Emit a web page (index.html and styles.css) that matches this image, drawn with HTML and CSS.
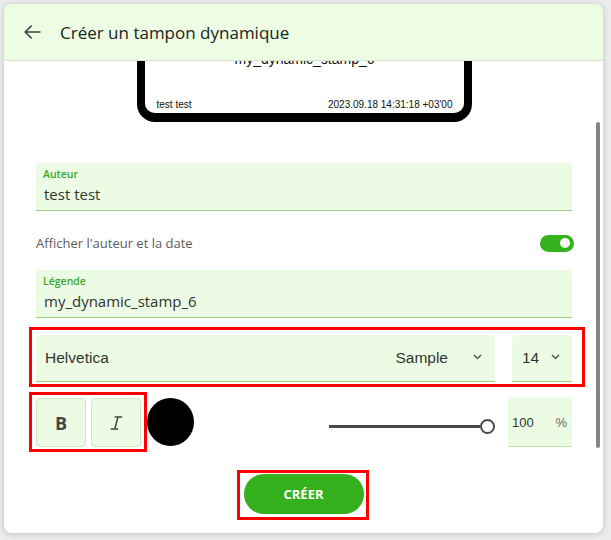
FILE: index.html
```html
<!DOCTYPE html>
<html>
  <head>
    <title>Créer un tampon dynamique</title>
    <link rel="stylesheet" href="styles.css">
  </head>
  <body>
    <div class="dialog">
      <div class="header">
        <svg class="back" width="17" height="14" viewBox="0 0 17 14">
          <path d="M1.2 7H16.5M7.6 0.6L1.2 7L7.6 13.4" fill="none" stroke="#444" stroke-width="1.6"/>
        </svg>
        <h1>Créer un tampon dynamique</h1>
      </div>

      <div class="content">
        <div class="scroll">
          <div class="stamp">
            <div class="stamp-title">my_dynamic_stamp_6</div>
            <div class="stamp-footer">
              <span>test test</span>
              <span>2023.09.18 14:31:18 +03'00</span>
            </div>
          </div>

          <div class="field field-author">
            <div class="field-label">Auteur</div>
            <div class="field-value">test test</div>
          </div>

          <div class="option">
            <span>Afficher l'auteur et la date</span>
            <span class="toggle"><span class="knob"></span></span>
          </div>

          <div class="field">
            <div class="field-label">Légende</div>
            <div class="field-value">my_dynamic_stamp_6</div>
          </div>

          <div class="font-box">
            <div class="select select-font">
              <span class="name">Helvetica</span>
              <span class="sample">Sample</span>
              <svg class="chevron" width="9" height="6" viewBox="0 0 9 6"><path d="M1 1L4.5 4.5L8 1" fill="none" stroke="#555" stroke-width="1.5"/></svg>
            </div>
            <div class="select select-size">
              <span>14</span>
              <svg class="chevron" width="9" height="6" viewBox="0 0 9 6"><path d="M1 1L4.5 4.5L8 1" fill="none" stroke="#555" stroke-width="1.5"/></svg>
            </div>
          </div>

          <div class="style-row">
            <div class="style-box">
              <div class="style-btn">B</div>
              <div class="style-btn">
                <svg width="13" height="14" viewBox="0 0 13 14">
                  <path d="M4.6 1H12.2M0.6 13H8.2M8 1L4.8 13" fill="none" stroke="#444" stroke-width="1.5"/>
                </svg>
              </div>
            </div>
            <div class="color-dot"></div>
            <div class="spacer"></div>
            <div class="slider">
              <span class="track"></span>
              <span class="thumb"></span>
            </div>
            <div class="opacity">
              <span>100</span>
              <span class="unit">%</span>
            </div>
          </div>

          <div class="actions">
            <div class="create-box">
              <button class="create-btn" type="button">CRÉER</button>
            </div>
          </div>
        </div>
        <div class="scrollbar"></div>
      </div>
    </div>
  </body>
</html>
```

FILE: styles.css
```css
body {
  margin: 0;
  height: 540px;
  overflow: hidden;
  background: #ececec;
  font-family: "Open Sans", sans-serif;
}

.dialog {
  margin: 4px 0 0 4px;
  width: 599px;
  height: 529px;
  background: #fff;
  border-radius: 8px;
  box-shadow: 0 1px 6px rgba(0, 0, 0, 0.18);
  overflow: hidden;
  display: flex;
  flex-direction: column;
}

.header {
  flex: none;
  height: 56px;
  background: #ecfde4;
  border-bottom: 1px solid #d2e5cb;
  display: flex;
  align-items: center;
  gap: 19px;
  padding-left: 20px;
}

.header h1 {
  margin: 0;
  font-size: 17px;
  font-weight: 400;
  color: #222;
}

.content {
  flex: 1;
  position: relative;
  overflow: hidden;
}

.scroll {
  padding: 0 31px 0 32px;
}

/* stamp preview, partly scrolled under the header */
.stamp {
  width: 335px;
  box-sizing: border-box;
  margin: -38px auto 0;
  border: 8px solid #000;
  border-bottom-width: 9px;
  border-radius: 18px;
  padding: 20px 11px 2px 12px;
  font-family: "Liberation Sans", Arial, sans-serif;
  color: #111;
}

.stamp-title {
  text-align: center;
  font-size: 14px;
  line-height: 16px;
  margin-bottom: 32px;
}

.stamp-footer {
  display: flex;
  justify-content: space-between;
  font-size: 10px;
  line-height: 12px;
}

.field {
  background: #ecfce4;
  border-bottom: 1px solid #98d087;
  border-radius: 4px 4px 0 0;
  padding: 4px 8px 5px;
}

.field-author {
  margin-top: 41px;
}

.field-label {
  font-size: 10.5px;
  line-height: 14px;
  font-weight: 600;
  color: #3aa82a;
  margin: 0 0 2px -1px;
}

.field-value {
  font-size: 15px;
  line-height: 22px;
  color: #333;
}

.option {
  display: flex;
  justify-content: space-between;
  align-items: center;
  height: 24px;
  margin: 20px 0 15px;
  font-size: 13px;
  color: #5c5c5c;
}

.toggle {
  width: 34px;
  height: 17px;
  margin-right: -2px;
  border-radius: 9px;
  background: #35b31f;
  display: flex;
  align-items: center;
  justify-content: flex-end;
  padding-right: 4px;
  box-sizing: border-box;
}

.knob {
  width: 10px;
  height: 10px;
  border-radius: 50%;
  background: #fff;
}

/* red annotation boxes */
.font-box {
  margin: 9px -13px 0 -7px;
  border: 3px solid #f00;
  padding: 5px 10px 2px 4px;
  display: flex;
  gap: 17px;
}

.select {
  height: 47px;
  box-sizing: border-box;
  background: #ecfce4;
  border-bottom: 1px solid #98d087;
  border-radius: 4px 4px 0 0;
  display: flex;
  align-items: center;
  font-family: "Liberation Sans", Arial, sans-serif;
  font-size: 15.5px;
  color: #333;
}

.select-font {
  flex: 1;
  padding: 0 13px 0 9px;
}

.select-font .name {
  flex: 1;
}

.select-font .sample {
  margin-right: 25px;
}

.select-size {
  width: 60px;
  padding: 0 12px 0 10px;
  justify-content: space-between;
}

.chevron {
  margin-top: -2px;
}

.style-row {
  display: flex;
  align-items: center;
  margin-top: 5px;
}

.style-box {
  margin-left: -7px;
  border: 3px solid #f00;
  padding: 3px 3px 2px 4px;
  display: flex;
  gap: 5px;
}

.style-btn {
  width: 50px;
  height: 49px;
  box-sizing: border-box;
  background: #ecfce4;
  border: 1px solid #cbeabf;
  border-radius: 4px;
  display: flex;
  align-items: center;
  justify-content: center;
  font-size: 18px;
  font-weight: 700;
  color: #444;
}

.color-dot {
  width: 47px;
  height: 48px;
  border-radius: 50%;
  background: #000;
}

.spacer {
  flex: 1;
}

.slider {
  width: 166px;
  height: 16px;
  margin: 9px 13px 0 0;
  display: flex;
  align-items: center;
}

.track {
  width: 151px;
  height: 3px;
  background: #4a4a4a;
}

.thumb {
  width: 15px;
  height: 15px;
  box-sizing: border-box;
  border: 2px solid #4a4a4a;
  border-radius: 50%;
  background: #fff;
}

.opacity {
  width: 64px;
  height: 50px;
  box-sizing: border-box;
  background: #ecfce4;
  border-bottom: 1px solid #c0e8b2;
  display: flex;
  align-items: center;
  justify-content: space-between;
  padding: 2px 5px 0 4px;
  font-family: "Liberation Sans", Arial, sans-serif;
  font-size: 13px;
  color: #333;
}

.opacity .unit {
  color: #666;
}

.actions {
  display: flex;
  justify-content: center;
  margin-top: 18px;
}

.create-box {
  margin-left: -3px;
  border: 3px solid #f00;
  padding: 1px 2px 3px 4px;
  display: flex;
}

.create-btn {
  width: 120px;
  height: 40px;
  border: none;
  border-radius: 20px;
  background: #33b01c;
  color: #fff;
  font-family: "Open Sans", sans-serif;
  font-size: 13px;
  font-weight: 700;
}

.scrollbar {
  position: absolute;
  right: 3px;
  top: 61px;
  width: 4px;
  height: 326px;
  border-radius: 2px;
  background: #858585;
}
```
